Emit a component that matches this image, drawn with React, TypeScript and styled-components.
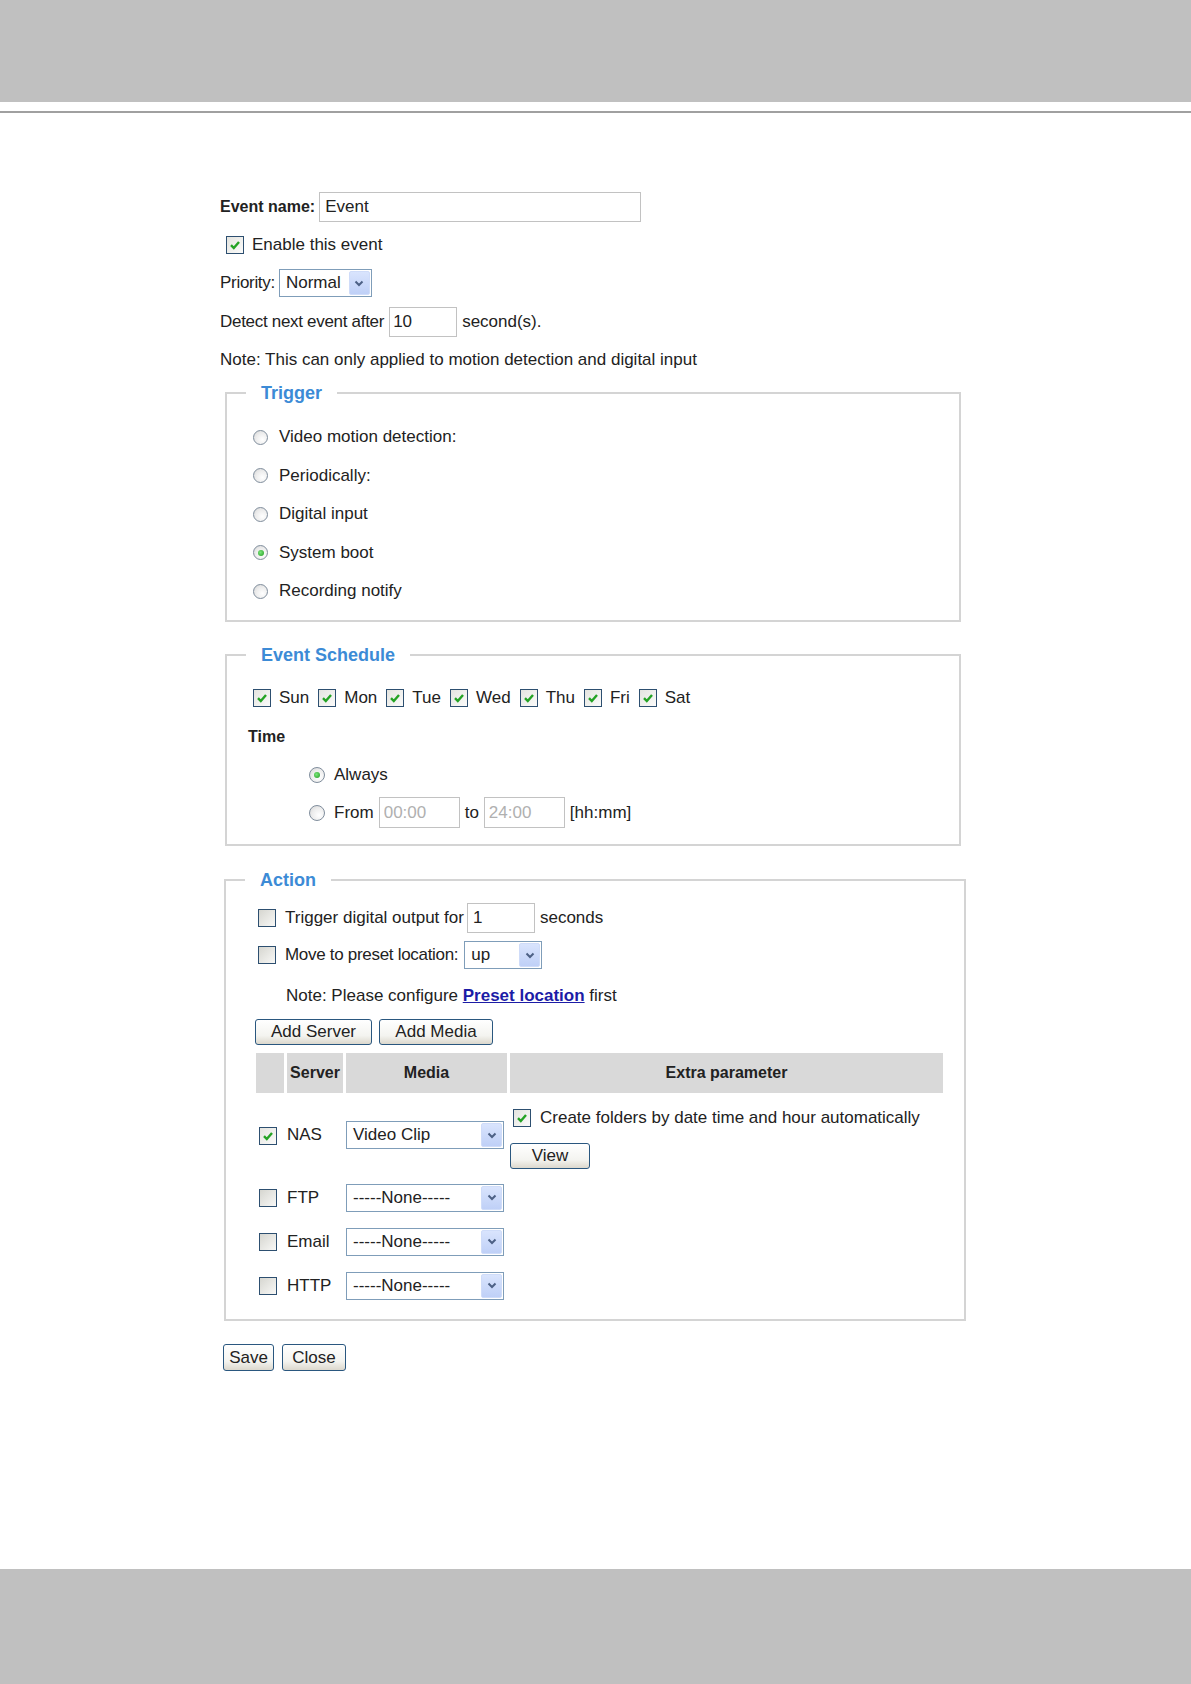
import React from 'react';
import styled, { createGlobalStyle } from 'styled-components';

const GlobalStyle = createGlobalStyle`
  html, body {
    margin: 0;
    padding: 0;
    background: #fff;
  }
  body {
    font-family: "Liberation Sans", Arial, sans-serif;
    font-size: 17px;
    color: #222;
  }
`;

const Page = styled.div`
  width: 1191px;
  min-height: 1684px;
  display: flex;
  flex-direction: column;
`;

const TopBand = styled.div`
  height: 102px;
  background: #c0c0c0;
`;

const Rule = styled.div`
  margin-top: 9px;
  height: 2px;
  background: #a0a0a0;
`;

const Content = styled.main`
  flex: 1;
  padding: 77px 0 0 220px;
`;

const BottomBand = styled.div`
  height: 115px;
  background: #c0c0c0;
`;

const Line = styled.div<{ $mt?: number; $h?: number; $pl?: number; $gap?: number; $ml?: number }>`
  display: flex;
  align-items: center;
  margin-top: ${p => p.$mt ?? 0}px;
  margin-left: ${p => p.$ml ?? 0}px;
  height: ${p => p.$h ?? 20}px;
  padding-left: ${p => p.$pl ?? 0}px;
  gap: ${p => p.$gap ?? 5}px;
  white-space: nowrap;
`;

const Bold = styled.span`
  font-weight: bold;
  font-size: 16px;
`;

const Tight = styled.span`
  letter-spacing: -0.3px;
`;

const TextField = styled.input<{ $w: number; $h: number; $pl?: number }>`
  box-sizing: border-box;
  width: ${p => p.$w}px;
  height: ${p => p.$h}px;
  border: 1px solid #c2c2c2;
  padding: 0 0 0 ${p => p.$pl ?? 4}px;
  margin: 0;
  font-family: inherit;
  font-size: 17px;
  color: #222;
  background: #fff;
  outline: none;

  &:disabled {
    color: #b0b0b0;
  }
`;

const SelectBox = styled.div<{ $w: number }>`
  box-sizing: border-box;
  width: ${p => p.$w}px;
  height: 28px;
  border: 1px solid #7f9db9;
  background: #fff;
  padding: 1px;
  display: flex;
  align-items: stretch;
  flex: none;
`;

const SelectText = styled.span`
  flex: 1;
  padding-left: 5px;
  display: flex;
  align-items: center;
`;

const SelectArrow = styled.span`
  width: 21px;
  border-radius: 2px;
  border: 1px solid #cfdcf9;
  box-sizing: border-box;
  background: linear-gradient(#d9e4fd, #bfd0f7);
  display: flex;
  align-items: center;
  justify-content: center;
`;

const Button = styled.button<{ $w: number; $h?: number }>`
  box-sizing: border-box;
  width: ${p => p.$w}px;
  height: ${p => p.$h ?? 26}px;
  padding: 0;
  margin: 0;
  font-family: inherit;
  font-size: 17px;
  color: #222;
  border: 1px solid #2a577f;
  border-radius: 3px;
  background: linear-gradient(#ffffff, #f4f4f0 65%, #dcd8cd);
  flex: none;
`;

const Box = styled.span<{ $checked?: boolean }>`
  box-sizing: border-box;
  width: 18px;
  height: 18px;
  border: 1px solid #2d4f70;
  background: ${p =>
    p.$checked
      ? 'linear-gradient(135deg, #e4e4df, #fbfbfa)'
      : 'linear-gradient(135deg, #d6d6d0, #f8f8f6)'};
  display: inline-flex;
  align-items: center;
  justify-content: center;
  vertical-align: middle;
  flex: none;
`;

const Dot = styled.span<{ $on?: boolean; $size: number }>`
  box-sizing: border-box;
  width: ${p => p.$size}px;
  height: ${p => p.$size}px;
  border-radius: 50%;
  border: 1px solid #7f8d9c;
  background: radial-gradient(circle at 65% 65%, #ffffff 0%, #ececec 55%, #d2d2d2 100%);
  display: inline-flex;
  align-items: center;
  justify-content: center;
  flex: none;

  &::after {
    content: '';
    width: ${p => Math.round(p.$size / 2.7)}px;
    height: ${p => Math.round(p.$size / 2.7)}px;
    border-radius: 50%;
    background: ${p => (p.$on ? 'radial-gradient(circle at 40% 40%, #7ae67a, #229a22)' : 'transparent')};
  }
`;

const Choice = styled.label<{ $gap?: number }>`
  display: inline-flex;
  align-items: center;
  gap: ${p => p.$gap ?? 9}px;
  white-space: nowrap;
`;

const Group = styled.fieldset<{ $w: number; $ml: number; $mt: number; $pad: string }>`
  box-sizing: border-box;
  width: ${p => p.$w}px;
  margin: ${p => p.$mt}px 0 0 ${p => p.$ml}px;
  border: 2px solid #d4d4d4;
  padding: ${p => p.$pad};
  min-inline-size: auto;
`;

const GroupTitle = styled.legend<{ $shift: number }>`
  margin-left: ${p => p.$shift}px;
  padding: 0 15px;
  font-size: 18px;
  font-weight: bold;
  line-height: 22px;
  color: #3c8bd6;
`;

const Stack = styled.div<{ $gap: number }>`
  display: flex;
  flex-direction: column;
  gap: ${p => p.$gap}px;
`;

const DayRow = styled.div`
  display: flex;
  align-items: center;
  height: 20px;
  gap: 9px;
`;

const TimeLabel = styled(Bold)`
  display: block;
  margin: 19px 0 0 -5px;
  line-height: 20px;
`;

const PresetLink = styled.a`
  color: #1c1ca6;
  font-weight: bold;
  text-decoration: underline;
`;

const MediaTable = styled.table`
  border-spacing: 3px;
  margin: 5px 0 0 -5px;
`;

const HeadCell = styled.th<{ $w: number }>`
  width: ${p => p.$w}px;
  height: 40px;
  padding: 0;
  background: #d9d9d9;
  font-size: 16px;
  font-weight: bold;
  text-align: center;
`;

const Cell = styled.td<{ $h?: number; $pl?: number; $pt?: number }>`
  height: ${p => p.$h ?? 41}px;
  padding: ${p => p.$pt ?? 0}px 0 0 ${p => p.$pl ?? 0}px;
  vertical-align: middle;
  white-space: nowrap;
`;

const FolderLine = styled(Choice)`
  display: flex;
  height: 20px;
  padding-left: 3px;
`;

const ViewButton = styled(Button)`
  display: block;
  margin-top: 15px;
`;

const Footer = styled.div`
  display: flex;
  gap: 8px;
  margin: 23px 0 0 3px;
`;

function Checkbox({ checked }: { checked?: boolean }) {
  return (
    <Box $checked={checked}>
      {checked && (
        <svg width="14" height="14" viewBox="0 0 14 14">
          <path d="M3 7.2 L5.8 10 L11 4" stroke="#24a324" strokeWidth="2.4" fill="none" />
        </svg>
      )}
    </Box>
  );
}

function Select({ value, width }: { value: string; width: number }) {
  return (
    <SelectBox $w={width}>
      <SelectText>{value}</SelectText>
      <SelectArrow>
        <svg width="10" height="7" viewBox="0 0 10 7">
          <path d="M1.5 1.5 L5 5 L8.5 1.5" stroke="#4d6185" strokeWidth="2" fill="none" />
        </svg>
      </SelectArrow>
    </SelectBox>
  );
}

const triggers = [
  { label: 'Video motion detection:', on: false },
  { label: 'Periodically:', on: false },
  { label: 'Digital input', on: false },
  { label: 'System boot', on: true },
  { label: 'Recording notify', on: false },
];

const days = ['Sun', 'Mon', 'Tue', 'Wed', 'Thu', 'Fri', 'Sat'];

const servers = [
  { name: 'FTP', media: '-----None-----' },
  { name: 'Email', media: '-----None-----' },
  { name: 'HTTP', media: '-----None-----' },
];

export default function App() {
  return (
    <Page>
      <GlobalStyle />
      <TopBand />
      <Rule />
      <Content>
        <Line $h={34} $gap={4}>
          <Bold>Event name:</Bold>
          <TextField $w={322} $h={30} $pl={5} value="Event" readOnly />
        </Line>
        <Line $mt={10} $h={22} $pl={6}>
          <Choice $gap={8}>
            <Checkbox checked />
            Enable this event
          </Choice>
        </Line>
        <Line $mt={13} $h={28} $gap={4}>
          <Tight>Priority:</Tight>
          <Select value="Normal" width={93} />
        </Line>
        <Line $mt={10} $h={30}>
          <Tight>Detect next event after</Tight>
          <TextField $w={68} $h={30} $pl={3} value="10" readOnly />
          second(s).
        </Line>
        <Line $mt={13}>Note: This can only applied to motion detection and digital input</Line>

        <Group $w={736} $ml={5} $mt={12} $pad="23px 0 19px 26px">
          <GroupTitle $shift={-7}>Trigger</GroupTitle>
          <Stack $gap={18.5}>
            {triggers.map(t => (
              <Line key={t.label}>
                <Choice $gap={11}>
                  <Dot $size={15} $on={t.on} />
                  {t.label}
                </Choice>
              </Line>
            ))}
          </Stack>
        </Group>

        <Group $w={736} $ml={5} $mt={22} $pad="22px 0 16px 26px">
          <GroupTitle $shift={-7}>Event Schedule</GroupTitle>
          <DayRow>
            {days.map(d => (
              <Choice key={d} $gap={8}>
                <Checkbox checked />
                {d}
              </Choice>
            ))}
          </DayRow>
          <TimeLabel>Time</TimeLabel>
          <Line $mt={18} $pl={56}>
            <Choice $gap={9}>
              <Dot $size={16} $on />
              Always
            </Choice>
          </Line>
          <Line $mt={12} $h={31} $pl={56}>
            <Choice $gap={9}>
              <Dot $size={16} />
              From
            </Choice>
            <TextField $w={81} $h={31} value="00:00" disabled readOnly />
            to
            <TextField $w={81} $h={31} value="24:00" disabled readOnly />
            [hh:mm]
          </Line>
        </Group>

        <Group $w={742} $ml={4} $mt={23} $pad="12px 0 10px 32px">
          <GroupTitle $shift={-13}>Action</GroupTitle>
          <Line $h={30} $gap={3}>
            <Choice>
              <Checkbox />
              Trigger digital output for
            </Choice>
            <TextField $w={68} $h={30} $pl={5} value="1" readOnly />
            <span style={{ marginLeft: 2 }}>seconds</span>
          </Line>
          <Line $mt={8} $h={28} $gap={6}>
            <Choice>
              <Checkbox />
              <Tight>Move to preset location:</Tight>
            </Choice>
            <Select value="up" width={78} />
          </Line>
          <Line $mt={17} $pl={28} $gap={0}>
            Note: Please configure&nbsp;<PresetLink href="#">Preset location</PresetLink>&nbsp;first
          </Line>
          <Line $mt={13} $h={26} $ml={-3} $gap={7}>
            <Button $w={117}>Add Server</Button>
            <Button $w={114}>Add Media</Button>
          </Line>
          <MediaTable>
            <thead>
              <tr>
                <HeadCell $w={28} />
                <HeadCell $w={56}>Server</HeadCell>
                <HeadCell $w={161}>Media</HeadCell>
                <HeadCell $w={433}>Extra parameter</HeadCell>
              </tr>
            </thead>
            <tbody>
              <tr>
                <Cell $h={78} $pl={3}>
                  <Checkbox checked />
                </Cell>
                <Cell $h={78}>NAS</Cell>
                <Cell $h={78}>
                  <Select value="Video Clip" width={158} />
                </Cell>
                <Cell $h={72} $pt={6}>
                  <FolderLine>
                    <Checkbox checked />
                    Create folders by date time and hour automatically
                  </FolderLine>
                  <ViewButton $w={80}>View</ViewButton>
                </Cell>
              </tr>
              {servers.map(s => (
                <tr key={s.name}>
                  <Cell $pl={3}>
                    <Checkbox />
                  </Cell>
                  <Cell>{s.name}</Cell>
                  <Cell>
                    <Select value={s.media} width={158} />
                  </Cell>
                  <Cell />
                </tr>
              ))}
            </tbody>
          </MediaTable>
        </Group>

        <Footer>
          <Button $w={51} $h={27}>Save</Button>
          <Button $w={64} $h={27}>Close</Button>
        </Footer>
      </Content>
      <BottomBand />
    </Page>
  );
}
